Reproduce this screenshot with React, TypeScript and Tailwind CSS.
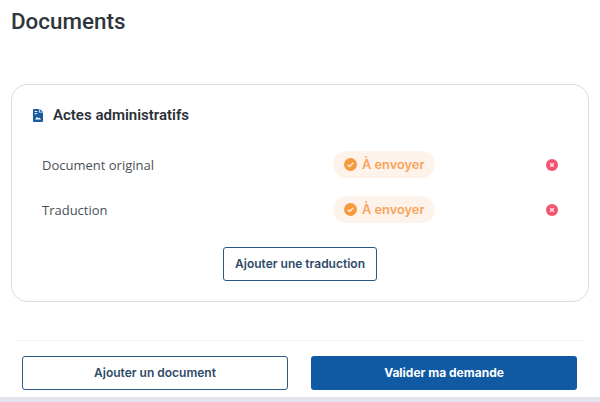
function FileIcon() {
  return (
    <svg width="10" height="13" viewBox="0 0 10 13" className="shrink-0">
      <path d="M1 0h4.8v3.4H10V12a1 1 0 0 1-1 1H1a1 1 0 0 1-1-1V1a1 1 0 0 1 1-1z" fill="#1a5a9e" />
      <path d="M6.6 0L10 2.7H6.6z" fill="#1a5a9e" />
      <path d="M2 10.6l2-2.8 1.5 1.6.9-.8 1.7 2z" fill="#ffffff" />
      <rect x="1.6" y="2" width="2.6" height="1" fill="#ffffff" />
      <rect x="1.6" y="4.2" width="2.6" height="1" fill="#ffffff" />
    </svg>
  );
}

function CheckIcon() {
  return (
    <svg width="13" height="13" viewBox="0 0 12 12" className="shrink-0">
      <circle cx="6" cy="6" r="6" fill="#f79a3e" />
      <path d="M3.4 6.2l1.8 1.7 3.4-3.5" fill="none" stroke="#fdeedd" strokeWidth="1.3" />
    </svg>
  );
}

function CloseIcon() {
  return (
    <svg width="12" height="12" viewBox="0 0 12 12" className="shrink-0">
      <circle cx="6" cy="6" r="6" fill="#f2556f" />
      <path d="M4.2 4.2l3.6 3.6M7.8 4.2l-3.6 3.6" fill="none" stroke="#ffe6ea" strokeWidth="1.4" />
    </svg>
  );
}

function Row({ label }: { label: string }) {
  return (
    <div className="flex h-[27px] items-center">
      <span className="w-[291px] pt-[2px] font-['Open_Sans',sans-serif] text-[13px] text-[#4a5059]">{label}</span>
      <span className="flex h-[27px] w-[102px] items-center gap-[5px] rounded-full bg-[#fef3ea] pl-[11px] font-['Inter',sans-serif] text-[12.8px] font-semibold text-[#f8a45c]">
        <CheckIcon />
        À envoyer
      </span>
      <span className="ml-[111px]">
        <CloseIcon />
      </span>
    </div>
  );
}

export default function App() {
  return (
    <div className="flex h-[402px] w-[600px] flex-col overflow-hidden bg-white font-['Roboto',sans-serif]">
      <h1 className="pl-[11px] pt-[8px] text-[22.4px] font-medium leading-[27px] text-[#2f353c]">Documents</h1>
      <section className="mx-[11px] mt-[49px] h-[218px] rounded-[16px] border border-[#dcdde0] pt-[19px]">
        <div className="flex h-[22px] items-center gap-[10px] pl-[21px]">
          <FileIcon />
          <h2 className="text-[15px] font-semibold text-[#2b3138]">Actes administratifs</h2>
        </div>
        <div className="mt-[25px] flex flex-col gap-[18px] pl-[30px]">
          <Row label="Document original" />
          <Row label="Traduction" />
        </div>
        <div className="mt-[24px] flex justify-center">
          <button className="flex h-[34px] w-[154px] items-center justify-center rounded-[3px] border border-[#2c5a85] bg-white font-['Inter',sans-serif] text-[12px] font-semibold text-[#2e4a68]">
            Ajouter une traduction
          </button>
        </div>
      </section>
      <div className="mx-[15px] mt-[38px] h-px bg-[#f6f6f7]" />
      <div className="mt-[15px] flex gap-[23px] px-[22px]">
        <button className="flex h-[34px] w-[266px] items-center justify-center rounded-[3px] border border-[#2c5a85] bg-white font-['Inter',sans-serif] text-[12px] font-semibold text-[#2e4a68]">
          Ajouter un document
        </button>
        <button className="flex h-[34px] w-[266px] items-center justify-center rounded-[3px] bg-[#0f5aa3] font-['Inter',sans-serif] text-[12px] font-bold text-white">
          Valider ma demande
        </button>
      </div>
      <div className="mt-[7px] h-[5px] bg-[#e3e4ec]" />
    </div>
  );
}
